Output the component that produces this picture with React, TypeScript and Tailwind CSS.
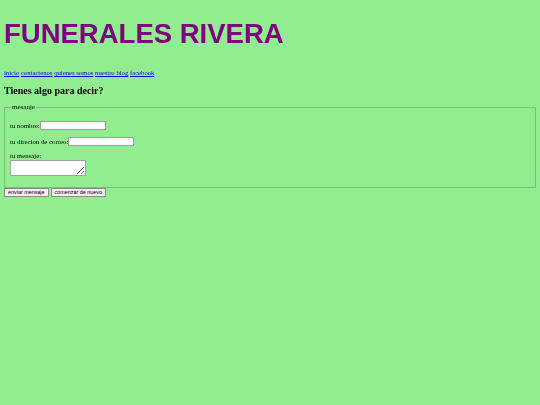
export default function App() {
  const links = ["inicio", "contactenos", "quienes somos", "nuestro blog", "facebook"];
  return (
    <div className="min-h-screen w-full bg-[#90ee90] p-[4px] font-['Liberation_Serif',serif] text-black">
      <h1 className="mt-[14px] font-['Liberation_Sans',Arial,sans-serif] text-[27.5px] font-bold leading-[32px] text-[#800080]">
        FUNERALES RIVERA
      </h1>
      <nav className="mt-[18px] text-[6.7px] leading-[10px]">
        {links.map((l, i) => (
          <span key={l}>
            <a href="#" className="text-[#0000ee] underline">
              {l}
            </a>
            {i < links.length - 1 ? " " : ""}
          </span>
        ))}
      </nav>
      <h3 className="mt-[7px] text-[10px] font-bold leading-[12px]">Tienes algo para decir?</h3>
      <form className="mt-[6px]">
        <fieldset className="mx-0 border border-[#80b880] px-[5px] pb-[11px] pt-[2px]">
          <legend className="ml-[1px] px-[1px] text-[7px] leading-[8px]">mesanje</legend>
          <div className="mt-[8px] flex items-center text-[6.8px] leading-[9px]">
            <span>tu nombre:</span>
            <input type="text" className="h-[9px] w-[66px] border border-[#a0a0a0] bg-white" />
          </div>
          <div className="mt-[7px] flex items-center text-[6.8px] leading-[9px]">
            <span>tu direcion de correo:</span>
            <input type="text" className="h-[9px] w-[66px] border border-[#a0a0a0] bg-white" />
          </div>
          <div className="mt-[5px] text-[6.8px] leading-[9px]">tu mensaje:</div>
          <textarea className="block h-[16px] w-[76px] resize border border-[#a0a0a0] bg-white" />
        </fieldset>
        <div className="flex gap-[2px] font-['Liberation_Sans',Arial,sans-serif] text-[5.4px] leading-[7px]">
          <button type="button" className="h-[9px] border border-[#8a8a8a] bg-[#f0f0f0] px-[3px]">
            enviar mensaje
          </button>
          <button type="button" className="h-[9px] border border-[#8a8a8a] bg-[#f0f0f0] px-[3px]">
            comenzar de nuevo
          </button>
        </div>
      </form>
    </div>
  );
}
